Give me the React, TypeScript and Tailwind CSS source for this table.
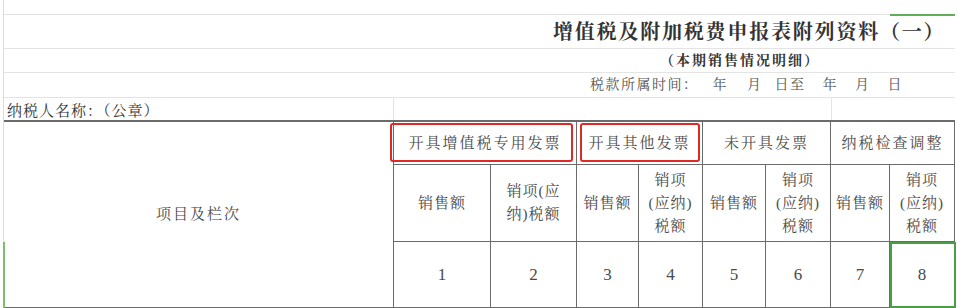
import React from 'react';

const groups = ['开具增值税专用发票', '开具其他发票', '未开具发票', '纳税检查调整'];

const SaleAmount = () => <span>销售额</span>;

// 表头第二行：每组两列
const subHeads: React.ReactNode[] = [
  <SaleAmount key="a1" />,
  <span key="b1">
    销项(应
    <br />
    纳)税额
  </span>,
  <SaleAmount key="a2" />,
  <span key="b2">
    销项
    <br />
    (应纳)
    <br />
    税额
  </span>,
  <SaleAmount key="a3" />,
  <span key="b3">
    销项
    <br />
    (应纳)
    <br />
    税额
  </span>,
  <SaleAmount key="a4" />,
  <span key="b4">
    销项
    <br />
    (应纳)
    <br />
    税额
  </span>,
];

export default function App() {
  return (
    <div
      className="relative w-[958px] h-[308px] overflow-hidden bg-white text-[#4a4a4a]"
      style={{ fontFamily: '"Liberation Serif", "Noto Serif CJK SC", "Noto Sans CJK SC", serif' }}
    >
      <div className="ml-[3px] w-[952px] border-l border-[#dcdcdc] flex flex-col">
        {/* 顶部空白 */}
        <div className="h-[15px] border-b border-[#e4e4e4]" />

        {/* 标题 */}
        <div className="h-[34px] border-b border-[#e4e4e4] flex items-center pl-[549px]">
          <span className="text-[20px] font-bold tracking-[1.8px] text-[#333] leading-none">
            增值税及附加税费申报表附列资料（一）
          </span>
        </div>

        {/* 副标题 */}
        <div className="h-[24px] border-b border-[#e4e4e4] flex items-center pl-[656px]">
          <span className="text-[14px] font-bold tracking-[2px] text-[#333] leading-none">
            （本期销售情况明细）
          </span>
        </div>

        {/* 税款所属时间 */}
        <div className="h-[25px] border-b border-[#e4e4e4] flex items-center pl-[586px] text-[14px] tracking-[1.5px] text-[#555] leading-none">
          <span>税款所属时间：</span>
          <span className="ml-[14px]">年</span>
          <span className="ml-[19px]">月</span>
          <span className="ml-[12px]">日至</span>
          <span className="ml-[17px]">年</span>
          <span className="ml-[17px]">月</span>
          <span className="ml-[17px]">日</span>
        </div>

        {/* 纳税人名称 */}
        <div className="h-[24px] border-b-2 border-[#6b6b6b] flex">
          <div className="w-[390px] border-r border-[#e4e4e4] flex items-end pl-[3px] pb-[1px]">
            <span className="text-[15px] tracking-[1px] text-[#333] leading-none">
              纳税人名称：（公章）
            </span>
          </div>
          <div className="w-[438px] border-r border-[#e4e4e4]" />
          <div className="flex-1" />
        </div>

        {/* 表格 */}
        <div className="grid grid-cols-[389px_96px_85px_61px_63px_62px_64px_58px_64px] grid-rows-[42px_76px_65px] gap-px bg-[#6b6b6b] border-r border-b border-[#6b6b6b] text-[15px] leading-[23px]">
          <div className="row-span-3 bg-white flex items-center justify-center tracking-[2px]">
            项目及栏次
          </div>

          {groups.map((g, i) => (
            <div
              key={g}
              className="relative col-span-2 bg-white flex items-center justify-center tracking-[2px]"
            >
              {g}
              {i === 0 && (
                <div className="absolute left-[-4px] right-[3px] top-[1px] bottom-[2px] rounded-[3px] border-2 border-[#dd2a26]" />
              )}
              {i === 1 && (
                <div className="absolute left-[3px] right-[2px] top-[1px] bottom-[2px] rounded-[3px] border-2 border-[#dd2a26]" />
              )}
            </div>
          ))}

          {subHeads.map((s, i) => (
            <div key={i} className="bg-white flex items-center justify-center text-center tracking-[1px]">
              {s}
            </div>
          ))}

          {[1, 2, 3, 4, 5, 6, 7, 8].map((n) => (
            <div key={n} className="relative bg-white flex items-center justify-center text-[17px]">
              {n}
              {n === 8 && (
                <div className="absolute left-0 top-0 right-[-2px] bottom-[-1px] border-2 border-[#4a9e45]" />
              )}
            </div>
          ))}
        </div>
      </div>

      {/* 选中单元格标记 */}
      <div className="absolute left-[890px] top-[14px] w-[65px] h-[2px] bg-[#62ad58]" />
      <div className="absolute left-[3px] top-[242px] w-[2px] h-[66px] bg-[#7cbf6a]" />
    </div>
  );
}
